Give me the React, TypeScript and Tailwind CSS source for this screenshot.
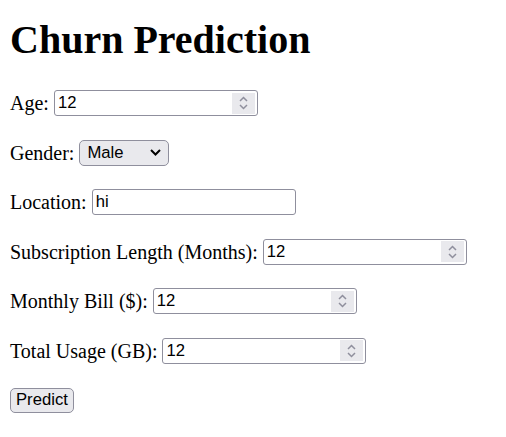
const Spinner = () => (
  <div className="flex h-[21px] w-[23px] shrink-0 flex-col items-center justify-center gap-[2px] bg-[#e9e9ed] mr-[2px]">
    <svg width="9" height="6" viewBox="0 0 9 6">
      <path d="M1 5 L4.5 1.5 L8 5" fill="none" stroke="#8f8f9d" strokeWidth="1.5" />
    </svg>
    <svg width="9" height="6" viewBox="0 0 9 6">
      <path d="M1 1 L4.5 4.5 L8 1" fill="none" stroke="#8f8f9d" strokeWidth="1.5" />
    </svg>
  </div>
);

const Field = ({ value, number }: { value: string; number?: boolean }) => (
  <div className="flex h-[26px] w-[204px] items-center rounded-[3px] border border-[#8f8f9d] bg-white">
    <input
      readOnly
      value={value}
      className="h-full min-w-0 flex-1 bg-transparent px-[3px] font-['Liberation_Sans',Arial,sans-serif] text-[16.67px] text-black outline-none"
    />
    {number && <Spinner />}
  </div>
);

const Row = ({ label, children }: { label: string; children: React.ReactNode }) => (
  <div className="flex h-[26px] items-center gap-[5px]">
    <label>{label}</label>
    {children}
  </div>
);

const App = () => {
  return (
    <div className="min-h-screen bg-white px-[10px] font-['Liberation_Serif','Times_New_Roman',serif] text-[20px] text-black">
      <h1 className="pt-[17px] text-[40px] font-bold leading-[46px]">Churn Prediction</h1>
      <form className="mt-[27px] flex flex-col gap-[23.6px]">
        <Row label="Age:">
          <Field value="12" number />
        </Row>
        <Row label="Gender:">
          <div className="flex h-[26px] w-[90px] items-center justify-between rounded-[5px] border border-[#8f8f9d] bg-[#e9e9ed] pl-[7px] pr-[7px] font-['Liberation_Sans',Arial,sans-serif] text-[16.67px]">
            <span>Male</span>
            <svg width="11" height="7" viewBox="0 0 11 7">
              <path d="M1 1 L5.5 5.5 L10 1" fill="none" stroke="#000" strokeWidth="2" />
            </svg>
          </div>
        </Row>
        <Row label="Location:">
          <Field value="hi" />
        </Row>
        <Row label="Subscription Length (Months):">
          <Field value="12" number />
        </Row>
        <Row label="Monthly Bill ($):">
          <Field value="12" number />
        </Row>
        <Row label="Total Usage (GB):">
          <Field value="12" number />
        </Row>
        <div className="flex h-[25px] items-center">
          <button
            type="button"
            className="h-[25px] rounded-[5px] border border-[#8f8f9d] bg-[#e9e9ed] px-[5px] font-['Liberation_Sans',Arial,sans-serif] text-[16.67px] leading-none"
          >
            Predict
          </button>
        </div>
      </form>
    </div>
  );
};

export default App;
